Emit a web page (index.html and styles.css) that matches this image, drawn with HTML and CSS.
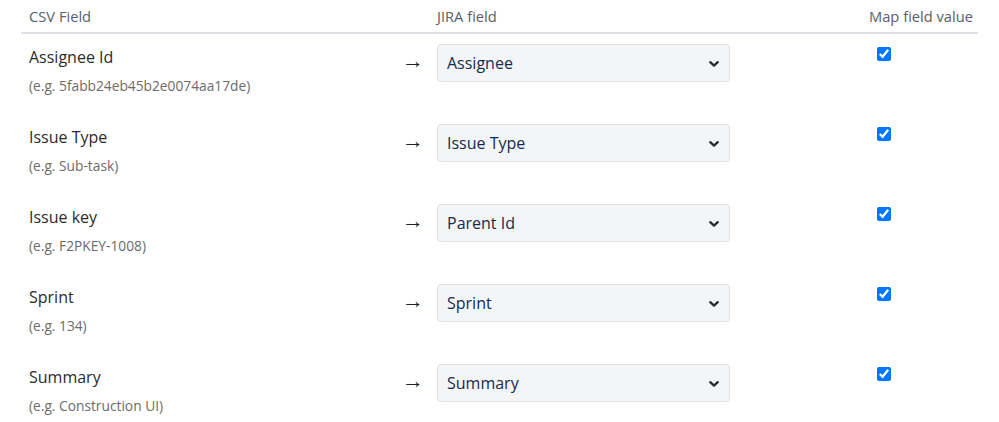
FILE: index.html
```html
<!DOCTYPE html>
<html>
<head>
<meta charset="utf-8">
<link rel="stylesheet" href="styles.css">
</head>
<body>
<div class="map">
  <div class="head">
    <div class="h-csv">CSV Field</div>
    <div class="h-arrow"></div>
    <div class="h-jira">JIRA field</div>
    <div class="h-map">Map field value</div>
  </div>

  <div class="row">
    <div class="csv"><div class="name">Assignee Id</div><div class="ex">(e.g. 5fabb24eb45b2e0074aa17de)</div></div>
    <div class="arrow">→</div>
    <div class="jira"><div class="sel"><span>Assignee</span><svg class="chev" viewBox="0 0 10 6" width="10" height="6"><path d="M1.3 1.2 L5 4.6 L8.7 1.2" fill="none" stroke="#2a2a2a" stroke-width="2.3" stroke-linecap="round" stroke-linejoin="round"/></svg></div></div>
    <div class="chk"><input type="checkbox" checked></div>
  </div>

  <div class="row">
    <div class="csv"><div class="name">Issue Type</div><div class="ex">(e.g. Sub-task)</div></div>
    <div class="arrow">→</div>
    <div class="jira"><div class="sel"><span>Issue Type</span><svg class="chev" viewBox="0 0 10 6" width="10" height="6"><path d="M1.3 1.2 L5 4.6 L8.7 1.2" fill="none" stroke="#2a2a2a" stroke-width="2.3" stroke-linecap="round" stroke-linejoin="round"/></svg></div></div>
    <div class="chk"><input type="checkbox" checked></div>
  </div>

  <div class="row">
    <div class="csv"><div class="name">Issue key</div><div class="ex">(e.g. F2PKEY-1008)</div></div>
    <div class="arrow">→</div>
    <div class="jira"><div class="sel"><span>Parent Id</span><svg class="chev" viewBox="0 0 10 6" width="10" height="6"><path d="M1.3 1.2 L5 4.6 L8.7 1.2" fill="none" stroke="#2a2a2a" stroke-width="2.3" stroke-linecap="round" stroke-linejoin="round"/></svg></div></div>
    <div class="chk"><input type="checkbox" checked></div>
  </div>

  <div class="row">
    <div class="csv"><div class="name">Sprint</div><div class="ex">(e.g. 134)</div></div>
    <div class="arrow">→</div>
    <div class="jira"><div class="sel"><span>Sprint</span><svg class="chev" viewBox="0 0 10 6" width="10" height="6"><path d="M1.3 1.2 L5 4.6 L8.7 1.2" fill="none" stroke="#2a2a2a" stroke-width="2.3" stroke-linecap="round" stroke-linejoin="round"/></svg></div></div>
    <div class="chk"><input type="checkbox" checked></div>
  </div>

  <div class="row">
    <div class="csv"><div class="name">Summary</div><div class="ex">(e.g. Construction UI)</div></div>
    <div class="arrow">→</div>
    <div class="jira"><div class="sel"><span>Summary</span><svg class="chev" viewBox="0 0 10 6" width="10" height="6"><path d="M1.3 1.2 L5 4.6 L8.7 1.2" fill="none" stroke="#2a2a2a" stroke-width="2.3" stroke-linecap="round" stroke-linejoin="round"/></svg></div></div>
    <div class="chk"><input type="checkbox" checked></div>
  </div>
</div>
</body>
</html>
```

FILE: styles.css
```css
html, body {
  margin: 0;
  padding: 0;
  background: #ffffff;
}
body {
  font-family: "Open Sans", "Noto Sans", sans-serif;
  color: #212529;
}
.map {
  margin-left: 21px;
  width: 957px;
}
.head, .row {
  display: grid;
  grid-template-columns: 373px 43px 322px 219px;
}
.head {
  height: 32px;
  border-bottom: 2px solid #dee2e6;
  font-size: 14.7px;
  color: #56616c;
  align-items: center;
}
.h-csv { padding-left: 8px; }
.h-map { text-align: right; padding-right: 5px; }
.row {
  height: 80px;
  align-items: start;
}
.csv {
  padding-left: 8px;
  padding-top: 11px;
}
.name {
  font-size: 16px;
  line-height: 24px;
  color: #2b2b2b;
}
.ex {
  margin-top: 6px;
  font-size: 13.75px;
  line-height: 21px;
  color: #6b6b6b;
}
.arrow {
  padding-top: 15px;
  padding-left: 8px;
  font-size: 22px;
  line-height: 24px;
  color: #222;
  font-family: "Liberation Sans", sans-serif;
}
.jira {
  padding-top: 10px;
}
.sel {
  width: 293px;
  height: 38px;
  box-sizing: border-box;
  background: #f4f5f7;
  border: 1px solid #dfe1e6;
  border-radius: 4px;
  display: flex;
  align-items: center;
  justify-content: space-between;
  padding: 0 10px 0 9px;
  font-size: 16px;
  color: #172b4d;
}
.chev {
  margin-top: 1px;
}
.chk {
  padding-top: 10px;
  padding-left: 118px;
}
.chk input {
  margin: 0;
  width: 14px;
  height: 14px;
  accent-color: #0075ff;
}
```
